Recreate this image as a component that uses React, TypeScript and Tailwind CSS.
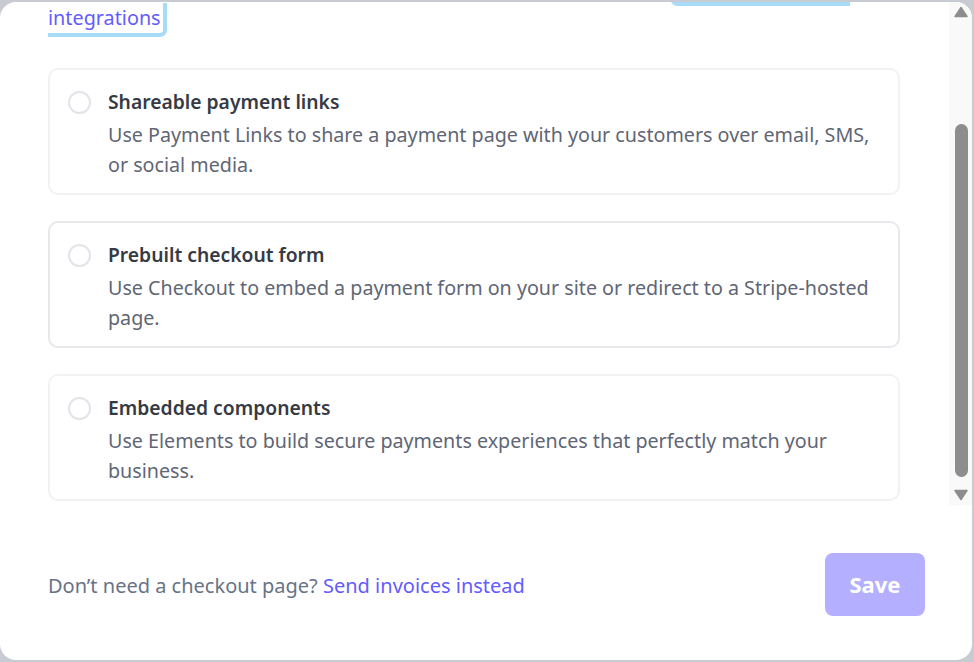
import React from "react";

const font = { fontFamily: '"Noto Sans", "Open Sans", Arial, sans-serif' };

function Option({ title, desc, strong }: { title: string; desc: string; strong?: boolean }) {
  return (
    <div
      className={
        "flex gap-[17px] rounded-[10px] border-2 bg-white pl-[18px] pr-[10px] pt-[17px] pb-[13px] " +
        (strong ? "border-[#e6e8ec]" : "border-[#f1f2f4]")
      }
    >
      <div className="mt-[4px] h-[23px] w-[23px] shrink-0 rounded-full border-2 border-[#e1e4e9] bg-white" />
      <div className="flex flex-col">
        <div className="text-[19.3px] leading-[30px] font-semibold text-[#353a44]">{title}</div>
        <div className="mt-[3px] text-[19.7px] leading-[30px] text-[#5f6675]">{desc}</div>
      </div>
    </div>
  );
}

export default function App() {
  return (
    <div className="h-[662px] w-[974px] overflow-hidden bg-[#c8cbd2] pt-[2px] pr-[2px] pb-[2px]" style={font}>
      <div className="flex h-[658px] flex-col overflow-hidden rounded-[16px] bg-white">
        <div className="flex h-[503px] shrink-0">
          <div className="relative flex-1 overflow-hidden">
            <div className="absolute left-[670px] top-[-8px] h-[12px] w-[180px] rounded-bl-[8px] bg-[#a7dbf7]" />
            <div className="px-[48px] pt-[1px]">
              <div className="flex">
                <span className="rounded-br-[7px] border-b-4 border-r-4 border-[#a7dbf7] pr-[2px] text-[19.8px] leading-[30px] text-[#635bff]">
                  integrations
                </span>
              </div>
              <div className="mt-[31px] flex w-[852px] flex-col gap-[26px]">
                <Option
                  title="Shareable payment links"
                  desc="Use Payment Links to share a payment page with your customers over email, SMS, or social media."
                />
                <Option
                  strong
                  title="Prebuilt checkout form"
                  desc="Use Checkout to embed a payment form on your site or redirect to a Stripe-hosted page."
                />
                <Option
                  title="Embedded components"
                  desc="Use Elements to build secure payments experiences that perfectly match your business."
                />
              </div>
            </div>
          </div>
          <div className="flex w-[23px] shrink-0 flex-col items-center bg-[#f9f9f9] pt-[4px] pb-[4px] pl-[1px]">
            <svg width="14" height="12" viewBox="0 0 14 12" className="shrink-0">
              <path d="M7 1.5 L13 10.5 L1 10.5 Z" fill="#8d8d8d" stroke="#8d8d8d" strokeWidth="1.5" strokeLinejoin="round" />
            </svg>
            <div className="mt-[106px] h-[353px] w-[13px] rounded-full bg-[#8d8d8d]" />
            <div className="flex-1" />
            <svg width="14" height="12" viewBox="0 0 14 12" className="shrink-0">
              <path d="M1 1.5 L13 1.5 L7 10.5 Z" fill="#8d8d8d" stroke="#8d8d8d" strokeWidth="1.5" strokeLinejoin="round" />
            </svg>
          </div>
        </div>
        <div className="flex flex-1 items-center justify-between pl-[48px] pr-[47px] pt-[3px]">
          <div className="mt-[4px] text-[20px] leading-[30px] text-[#687385]">
            Don’t need a checkout page? <span className="text-[#635bff]">Send invoices instead</span>
          </div>
          <button className="h-[63px] w-[100px] rounded-[8px] bg-[#b4afff] text-[22px] font-bold text-white">
            Save
          </button>
        </div>
      </div>
    </div>
  );
}
